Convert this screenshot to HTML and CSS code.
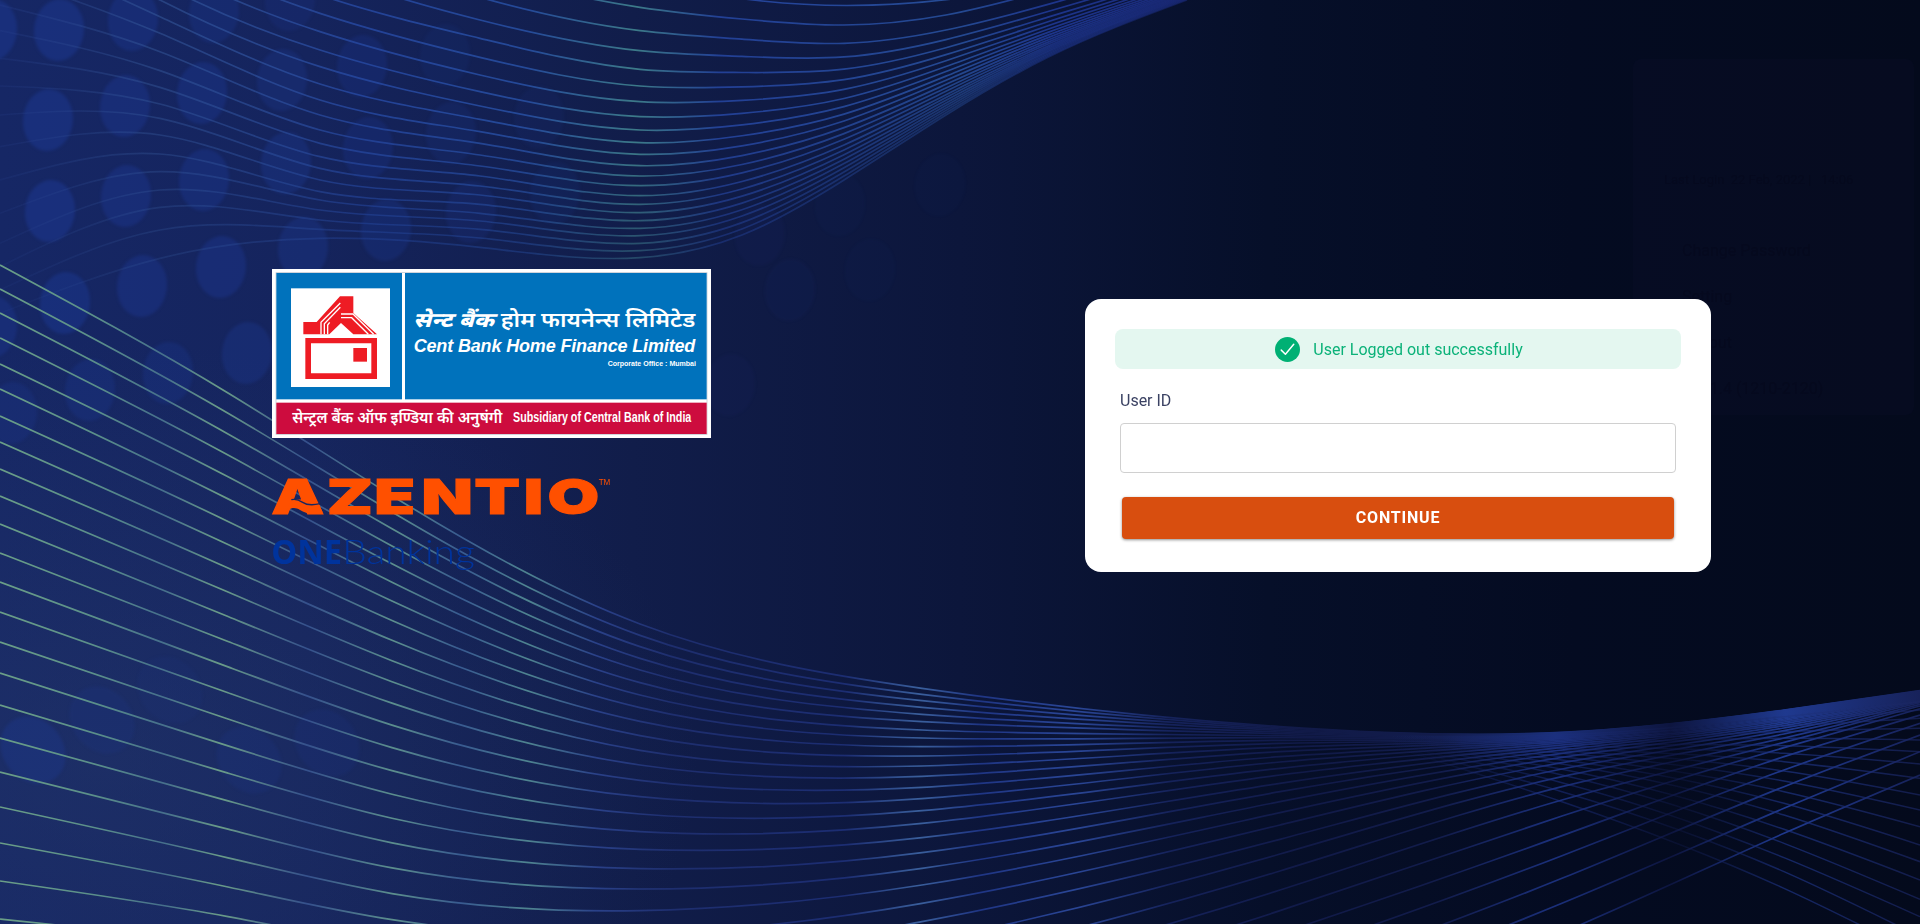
FILE: index.html
```html
<!DOCTYPE html>
<html lang="en">
<head>
<meta charset="utf-8">
<title>Cent Bank Home Finance Limited - Login</title>
<link rel="stylesheet" href="styles.css">
</head>
<body>
<svg class="backdrop" viewBox="0 0 1920 924" preserveAspectRatio="none" aria-hidden="true">
  <defs>
    <linearGradient id="base" x1="0" x2="1" y1="0" y2="0">
      <stop offset="0" stop-color="#162765"/><stop offset=".16" stop-color="#15245d"/>
      <stop offset=".33" stop-color="#111d4a"/><stop offset=".5" stop-color="#0c163b"/>
      <stop offset=".66" stop-color="#060f29"/><stop offset=".82" stop-color="#040b21"/>
      <stop offset="1" stop-color="#040a1c"/>
    </linearGradient>
    <radialGradient id="lift" gradientUnits="userSpaceOnUse" cx="0" cy="0" r="1" gradientTransform="translate(100 760) scale(600 420)">
      <stop offset="0" stop-color="#25386a" stop-opacity=".45"/><stop offset="1" stop-color="#25386a" stop-opacity="0"/>
    </radialGradient>
    <linearGradient id="lowerInk" gradientUnits="userSpaceOnUse" x1="0" y1="0" x2="1920" y2="0">
      <stop offset="0" stop-color="#6a9e87"/><stop offset=".05" stop-color="#5b8f8a"/>
      <stop offset=".085" stop-color="#466f8c"/><stop offset=".115" stop-color="#6a9c88"/>
      <stop offset=".16" stop-color="#35508c"/><stop offset=".205" stop-color="#5c8f8d"/>
      <stop offset=".24" stop-color="#385a90"/><stop offset=".275" stop-color="#4f8490"/>
      <stop offset=".31" stop-color="#2a4189"/><stop offset=".35" stop-color="#1e2e6e"/>
      <stop offset=".44" stop-color="#1c2d72"/><stop offset=".479" stop-color="#3a5f9c"/>
      <stop offset=".51" stop-color="#1f3584"/><stop offset=".56" stop-color="#2a4696"/>
      <stop offset=".61" stop-color="#15225a"/><stop offset=".68" stop-color="#111a48"/>
      <stop offset=".75" stop-color="#121c4b"/><stop offset=".81" stop-color="#1b307c"/>
      <stop offset=".87" stop-color="#0d153f"/><stop offset=".93" stop-color="#1f398f"/>
      <stop offset="1" stop-color="#17225a"/>
    </linearGradient>
    <linearGradient id="foldInk" gradientUnits="userSpaceOnUse" x1="1390" y1="0" x2="1920" y2="0">
      <stop offset="0" stop-color="#182663" stop-opacity="0"/><stop offset=".32" stop-color="#1c2f80" stop-opacity=".8"/>
      <stop offset=".55" stop-color="#111a48" stop-opacity=".6"/><stop offset=".75" stop-color="#1d3382"/>
      <stop offset="1" stop-color="#1a2560"/>
    </linearGradient>
    <linearGradient id="upperInk" gradientUnits="userSpaceOnUse" x1="0" y1="0" x2="1200" y2="0">
      <stop offset="0" stop-color="#2c4490" stop-opacity=".25"/><stop offset=".12" stop-color="#3a5fa0" stop-opacity=".5"/>
      <stop offset=".3" stop-color="#24449a"/><stop offset=".44" stop-color="#264c9c"/>
      <stop offset=".53" stop-color="#3f7f8c"/><stop offset=".6" stop-color="#24429a"/>
      <stop offset=".8" stop-color="#264c96"/><stop offset=".88" stop-color="#1e3690"/>
      <stop offset="1" stop-color="#1a297a"/>
    </linearGradient>
  </defs>
  <rect width="1920" height="924" fill="url(#base)"/>
  <rect width="1920" height="924" fill="url(#lift)"/>
  <g id="bokeh" class="bokeh"></g>
  <g id="upper" class="wave"></g>
  <g id="lower" class="wave"></g>
  <g id="fold" class="wave"></g>
</svg>

<aside class="profile-menu" aria-hidden="true">
  <p class="profile-login">Last Login &nbsp;22 Feb, 2022 | &nbsp; 14:06</p>
  <p>Change Password</p>
  <p>Setting</p>
  <p>Logout</p>
  <p>Ver 1.4 (1210-2120)</p>
</aside>

<main class="page">
  <section class="brand">
    <svg class="bank-logo" viewBox="36 27 1317 507" role="img" aria-label="Cent Bank Home Finance Limited">
      <rect x="36" y="27" width="1317" height="507" fill="#fff"/>
      <rect x="47" y="37" width="1295" height="487" fill="#b9bfc9"/>
      <rect x="49" y="39" width="1291" height="483" fill="#fff"/>
      <rect x="49" y="39" width="377" height="379" fill="#0072bc"/>
      <rect x="435" y="39" width="905" height="379" fill="#0072bc"/>
      <rect x="49" y="428" width="1291" height="94" fill="#cd0c3e"/>
      <rect x="93" y="85" width="297" height="296" fill="#fff"/>
      <g fill="#ee1c24">
        <path d="M130 186h40l70-77h40v50l71 64H280l-37-34-35 34H130z"/>
        <path fill-rule="evenodd" d="M136 234h215v123H136zM153 250v90h181v-90z"/>
        <path d="M280 264h41v41h-41z"/>
      </g>
      <path fill="none" stroke="#fff" stroke-width="4" d="M183 223v-36l58-58M193 223v-32l48-49M203 223v-28l6-8M243 162h36l62 61M243 173h32l50 50"/>
      <g class="logo-text">
        <text class="hindi hindi-bold" x="460" y="200" font-size="62" textLength="242" lengthAdjust="spacingAndGlyphs">सेन्ट बैंक</text>
        <text class="hindi" x="722" y="200" font-size="62" textLength="584" lengthAdjust="spacingAndGlyphs">होम फायनेन्स लिमिटेड</text>
        <text class="latin-italic" x="461" y="276" font-size="54" textLength="845" lengthAdjust="spacing">Cent Bank Home Finance Limited</text>
        <text class="latin-bold" x="1043" y="319" font-size="20" textLength="265" lengthAdjust="spacingAndGlyphs">Corporate Office : Mumbai</text>
        <text class="hindi hindi-strong" x="97" y="488" font-size="50" textLength="630" lengthAdjust="spacingAndGlyphs">सेन्ट्रल बैंक ऑफ इण्डिया की अनुषंगी</text>
        <text class="latin-bold" x="759" y="487" font-size="43" textLength="535" lengthAdjust="spacingAndGlyphs">Subsidiary of Central Bank of India</text>
      </g>
    </svg>
    <svg class="product-logo" viewBox="36 48 1020 300" role="img" aria-label="Azentio ONEBanking">
      <text class="azentio" transform="scale(1.4 1)" x="24 143 245 346 459 565 616" y="162">AZENTIO</text>
      <path class="azentio-wave" d="M74 162C88 142 104 140 120 150S160 168 188 157L178 134C150 142 135 132 120 124S98 118 90 128z"/>
      <path class="azentio-cut" d="M94 119q16-4 34 8t52 4"/>
      <text class="trademark" x="1016" y="74" textLength="35" lengthAdjust="spacingAndGlyphs">TM</text>
      <text class="one" x="34" y="311" textLength="212" lengthAdjust="spacingAndGlyphs">ONE</text>
      <text class="banking" x="247" y="311" textLength="397" lengthAdjust="spacingAndGlyphs">Banking</text>
    </svg>
  </section>

  <form class="card">
    <div class="alert" role="status">
      <svg class="alert-icon" viewBox="0 0 24 24" aria-hidden="true">
        <circle cx="12" cy="12" r="12" fill="#00b074"/>
        <path d="M6 12.6l4 4 8-9.6" fill="none" stroke="#fff" stroke-width="1.4" stroke-linecap="round" stroke-linejoin="round"/>
      </svg>
      <span>User Logged out successfully</span>
    </div>
    <label class="field-label" for="user-id">User ID</label>
    <input class="field" id="user-id" type="text">
    <button class="submit" type="button">CONTINUE</button>
  </form>
</main>
<script src="waves.js"></script>
</body>
</html>
```

FILE: styles.css
```css
* { box-sizing: border-box; }

body {
  margin: 0;
  height: 924px;
  overflow: hidden;
  position: relative;
  background: #081029;
  font-family: Roboto, "Liberation Sans", sans-serif;
}

.backdrop {
  position: absolute;
  inset: 0;
  width: 100%;
  height: 100%;
}

.wave { fill: none; stroke-width: 1.7; }
#upper { stroke: url(#upperInk); }
#lower { stroke: url(#lowerInk); }
#fold { stroke: url(#foldInk); stroke-width: 1.5; }
.bokeh { fill: #1c3892; filter: blur(1.5px); }

.profile-menu {
  position: absolute;
  left: 1633px;
  top: 59px;
  width: 281px;
  height: 356px;
  padding: 111px 0 0 49px;
  border-radius: 8px;
  background: rgba(40, 30, 90, 0.07);
  color: rgba(0, 0, 10, 0.14);
  font-size: 16px;
}
.profile-menu p { margin: 0 0 27px; line-height: 19px; white-space: nowrap; }
.profile-menu .profile-login { margin: 0 0 52px -18px; font-size: 13px; }

.page {
  position: relative;
  display: grid;
  grid-template-columns: 439px 626px;
  column-gap: 374px;
  align-items: start;
  padding: 269px 0 0 272px;
}

.brand { display: flex; flex-direction: column; align-items: flex-start; }
.bank-logo { display: block; width: 439px; height: 169px; overflow: visible; }
.product-logo { display: block; width: 340px; height: 100px; margin-top: 38px; overflow: visible; }

.logo-text { fill: #fff; }
.hindi { font-family: "Noto Sans Devanagari", "Lohit Devanagari", "Noto Sans", FreeSans, sans-serif; font-weight: 600; }
.hindi-bold { font-weight: 800; font-style: italic; }
.hindi-strong { font-weight: 600; }
.latin-italic { font-family: "Liberation Sans", Arial, sans-serif; font-weight: 700; font-style: italic; }
.latin-bold { font-family: "Liberation Sans", Arial, sans-serif; font-weight: 700; }

.azentio { font-family: Inter, sans-serif; font-weight: 900; font-size: 143px; fill: #ff5000; stroke: #ff5000; stroke-width: 3; }
.azentio-wave { fill: #ff5000; }
.azentio-cut { fill: none; stroke: #18275f; stroke-width: 4; }
.trademark { font-family: "Liberation Sans", Arial, sans-serif; font-size: 26px; fill: #ff5000; }
.one, .banking { fill: #00339c; font-size: 100px; }
.one { font-family: "Open Sans", sans-serif; font-weight: 700; }
.banking { font-family: Lato, sans-serif; font-weight: 300; }

.card {
  display: flex;
  flex-direction: column;
  height: 273px;
  margin-top: 30px;
  padding: 30px;
  border-radius: 16px;
  background: #fff;
}

.alert {
  display: flex;
  align-items: center;
  justify-content: center;
  gap: 13px;
  height: 40px;
  padding-left: 2px;
  border-radius: 8px;
  background: #e4f7f0;
  color: #0bb279;
  font-size: 16px;
}
.alert-icon { width: 25px; height: 25px; }

.field-label {
  margin: 22px 0 0 5px;
  line-height: 20px;
  font-size: 16px;
  color: #3b4263;
}

.field {
  height: 50px;
  margin: 12px 5px 0;
  padding: 0 12px;
  border: 1px solid #d0d0d0;
  border-radius: 4px;
  background: #fff;
  font: inherit;
}

.submit {
  height: 42px;
  margin: 24px 7px 0;
  padding: 0 0 1px;
  border: 0;
  border-radius: 4px;
  background: #d84e0f;
  box-shadow: 0 1px 3px rgba(0, 0, 0, 0.45);
  color: #fff;
  font: 700 16px/41px Roboto, sans-serif;
  letter-spacing: 0.8px;
}
```

FILE: waves.js
```js
const NS = "http://www.w3.org/2000/svg";

function add(groupId, tag, attrs) {
  const node = document.createElementNS(NS, tag);
  for (const key in attrs) node.setAttribute(key, attrs[key]);
  document.getElementById(groupId).appendChild(node);
}

// Natural cubic spline through a list of [x, y] points, as an SVG path.
function smooth(pts) {
  const n = pts.length;
  const h = [], s = [];
  for (let i = 0; i < n - 1; i++) {
    h.push(pts[i + 1][0] - pts[i][0]);
    s.push((pts[i + 1][1] - pts[i][1]) / h[i]);
  }
  // Tridiagonal system for the slope at each point.
  const a = [0], b = [2], c = [1], r = [3 * s[0]];
  for (let i = 1; i < n - 1; i++) {
    a.push(h[i]);
    b.push(2 * (h[i - 1] + h[i]));
    c.push(h[i - 1]);
    r.push(3 * (h[i] * s[i - 1] + h[i - 1] * s[i]));
  }
  a.push(1); b.push(2); c.push(0); r.push(3 * s[n - 2]);
  for (let i = 1; i < n; i++) {
    const m = a[i] / b[i - 1];
    b[i] -= m * c[i - 1];
    r[i] -= m * r[i - 1];
  }
  const slope = new Array(n);
  slope[n - 1] = r[n - 1] / b[n - 1];
  for (let i = n - 2; i >= 0; i--) slope[i] = (r[i] - c[i] * slope[i + 1]) / b[i];

  let d = `M${pts[0][0]} ${pts[0][1].toFixed(2)}`;
  for (let i = 1; i < n; i++) {
    const [x0, y0] = pts[i - 1], [x1, y1] = pts[i], t = h[i - 1] / 3;
    d += `C${x0 + t} ${(y0 + slope[i - 1] * t).toFixed(2)} ${x1 - t} ${(y1 - slope[i] * t).toFixed(2)} ${x1} ${y1.toFixed(2)}`;
  }
  return d;
}

// Lower mesh: one row per column position, one value per strand.
const third = list => list.map(v => 560 + v / 3);
const range = [...Array(31).keys()];
const lower = [
  [0, [265,289,313,338,364,389,416,442,469,496,524,553,582,612,642,673,705,738,772,807,843,881,919,958,998,1039,1081,1124,1168,1213,1259]],
  [228, range.map(i => 393 + 20 * i + 0.235 * i * i)],
  [392, range.map(i => 495.7 + 16 * i + 0.26 * i * i)],
  [640, third([192,226,260,295,330,368,405,443,484,527,571,615,661,710,762,815,868,926,987,1052,1122,1195,1270,1350,1432,1518,1608,1700,1796,1896,2000])],
  [922, third([385,403,422,442,463,485,510,534,560,588,618,649,682,716,752,790,833,878,925,975,1030,1085,1148,1215,1288,1365,1445,1530,1620,1715,1815])],
  [1280, third([500,503,507,511,516,521,527,533,541,550,562,575,590,606,625,645,670,695,725,758,795,838,882,933,990,1052,1120,1192,1270,1352,1440])],
  [1562, third([517,518,519,520,521,523,525,527,529,531,533,536,540,544,549,555,562,570,580,592,608,627,650,680,720,768,827,887,955,1030,1118])],
  [1784, third([450,451,452,453,454,455,456,457,458,460,462,464,467,470,473,477,481,486,491,497,504,512,522,534,547,563,590,630,680,745,820])],
  [1920, third([392,393,394,395,396,397,398,399,400,401,402,403,404,405,407,409,411,413,415,418,421,424,428,433,438,446,465,490,525,575,645])]
];
for (const i of range) {
  add("lower", "path", { d: smooth(lower.map(([x, ys]) => [x, ys[i]])) });
}

// Strands that fold back under the crest at the far right.
const fold = [
  [1390, third([558,556,554,552,550,548,546,544,542,540,538,536,534,532,530,529,528,527])],
  [1562, third([725,695,668,645,628,612,600,590,580,572,565,558,552,546,540,535,530,525])],
  [1784, third([985,935,893,850,808,765,730,695,663,633,605,580,557,535,515,498,483,470])],
  [1920, third([1185,1130,1070,1018,960,905,855,800,750,705,655,612,575,540,505,475,450,425])]
];
for (let i = 0; i < 18; i++) {
  add("fold", "path", { d: smooth(fold.map(([x, ys]) => [x, ys[i]])), opacity: 0.7 });
}

// Upper mesh: the strands gather towards the top right.
const at640 = [22,92,152,208,258,305,350,390,428,463,497,528,557,587,613,638,662,685,707,730,752,773];
const left = [
  [0, [-900,-800,-700,-600,-510,-430,-350,-270,-170,-75,15,92,175,258,345,440,540,640,730,800,870,940]],
  [160, [-500,-410,-320,-240,-170,-110,-50,0,50,100,155,212,262,312,355,405,462,515,570,622,690,775]],
  [320, [-270,-170,-85,-15,40,95,150,200,252,300,345,390,430,470,505,540,575,600,630,660,688,715]],
  [480, [-90,-8,60,115,172,225,275,318,358,395,430,465,498,528,558,585,613,640,663,688,714,742]],
  [640, at640]
];
const right = [[742,57,705,1],[844,75,540,0.9],[946,45,345,0.8],[1048,-30,172,0.65],[1187,-150,0,0.5]];
for (let k = 0; k < 22; k++) {
  const f = (at640[k] - 22) / 751;
  const pts = left.map(([x, ys]) => [x, ys[k] / 3])
    .concat(right.map(([x, a, b, e]) => [x, (a + (b - a) * Math.pow(f, e)) / 3]));
  add("upper", "path", { d: smooth(pts), opacity: k < 9 ? 0.95 : 0.95 - (k - 8) * 0.038 });
}
add("upper", "path", { d: "M745 -1Q845 12 952 -1" });

// Soft spots: x, y, opacity.
[[-8,30,.5],[59,30,.5],[133,20,.4],[214,12,.3],[290,0,.2],[48,120,.5],[125,106,.42],[202,93,.4],
 [282,80,.28],[362,66,.26],[445,55,.12],[50,211,.52],[126,196,.42],[204,180,.4],[286,163,.35],[368,148,.26],
 [451,133,.18],[539,117,.1],[65,303,.48],[142,286,.42],[221,267,.42],[303,248,.35],[386,230,.3],[471,212,.2],
 [555,193,.12],[-8,327,.4],[90,390,.3],[168,373,.3],[247,353,.35],[12,413,.25],[760,235,.06],
 [790,290,.08],[870,270,.05],[840,205,.05],[940,185,.04],[730,385,.06]
].forEach(([x, y, o]) => add("bokeh", "ellipse", { cx: x, cy: y, rx: 25, ry: 31, opacity: o, transform: `rotate(6 ${x} ${y})` }));
[[33,750,.35],[102,720,.18],[249,760,.18],[327,743,.15],[170,690,.1]
].forEach(([x, y, o]) => add("bokeh", "ellipse", { cx: x, cy: y, rx: 30, ry: 36, opacity: o, transform: `rotate(-40 ${x} ${y})` }));
```
